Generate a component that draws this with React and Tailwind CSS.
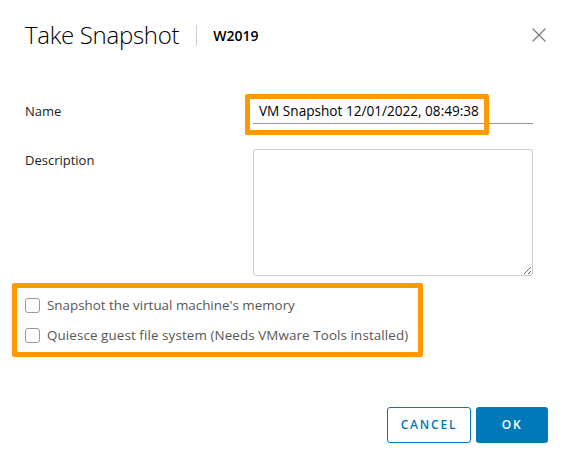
import { X } from "lucide-react";

export default function App() {
  return (
    <div className="relative w-[569px] h-[464px] bg-white font-['Open_Sans',sans-serif] text-[#222]">
      {/* Header */}
      <div className="flex items-center pl-[25px] pr-[18px] pt-[18px] h-[52px]">
        <h1 className="text-[24px] font-light leading-none text-black tracking-[-0.3px]">Take Snapshot</h1>
        <div className="w-px h-[21px] bg-[#ccc] ml-[17px] mr-[16px]" />
        <span className="text-[14px] font-semibold text-black">W2019</span>
        <button className="ml-auto text-[#777]">
          <X className="w-[24px] h-[24px]" strokeWidth={1.2} />
        </button>
      </div>

      {/* Form */}
      <div className="pl-[25px] pr-[36px] pt-[48px]">
        <div className="flex items-end h-[24px]">
          <label className="w-[228px] text-[13px] text-[#222] pb-[3px]">Name</label>
          <div className="flex-1 h-[24px] border-b border-[#999] flex items-center px-[6px] text-[13.6px] text-black">
            VM Snapshot 12/01/2022, 08:49:38
          </div>
        </div>

        <div className="flex mt-[25px]">
          <label className="w-[228px] text-[13px] text-[#222] pt-[2px]">Description</label>
          <textarea className="flex-1 h-[127px] border border-[#ccc] rounded-[3px] outline-none resize" />
        </div>

        <div className="mt-[19px] flex flex-col gap-[10px]">
          <label className="flex items-center gap-[7px] text-[13.4px] text-[#565656]">
            <span className="w-[15px] h-[15px] border border-[#999] rounded-[3px] bg-white" />
            Snapshot the virtual machine's memory
          </label>
          <label className="flex items-center gap-[7px] text-[13.4px] text-[#565656] tracking-[0.1px]">
            <span className="w-[15px] h-[15px] border border-[#999] rounded-[3px] bg-white" />
            Quiesce guest file system (Needs VMware Tools installed)
          </label>
        </div>
      </div>

      {/* Footer */}
      <div className="flex justify-end gap-[5px] pr-[21px] pt-[62px]">
        <button className="h-[36px] w-[84px] border border-[#0079b8] rounded-[3px] text-[#0079b8] text-[12px] font-semibold tracking-[1.8px]">
          CANCEL
        </button>
        <button className="h-[36px] w-[72px] bg-[#0079b8] rounded-[3px] text-white text-[12px] font-semibold tracking-[1.8px]">
          OK
        </button>
      </div>

      {/* Annotation highlights */}
      <div className="absolute left-[245px] top-[94px] w-[244px] h-[41px] border-[5px] border-[#ff9900] rounded-[2px] pointer-events-none" />
      <div className="absolute left-[12px] top-[283px] w-[411px] h-[74px] border-[5px] border-[#ff9900] rounded-[2px] pointer-events-none" />
    </div>
  );
}
